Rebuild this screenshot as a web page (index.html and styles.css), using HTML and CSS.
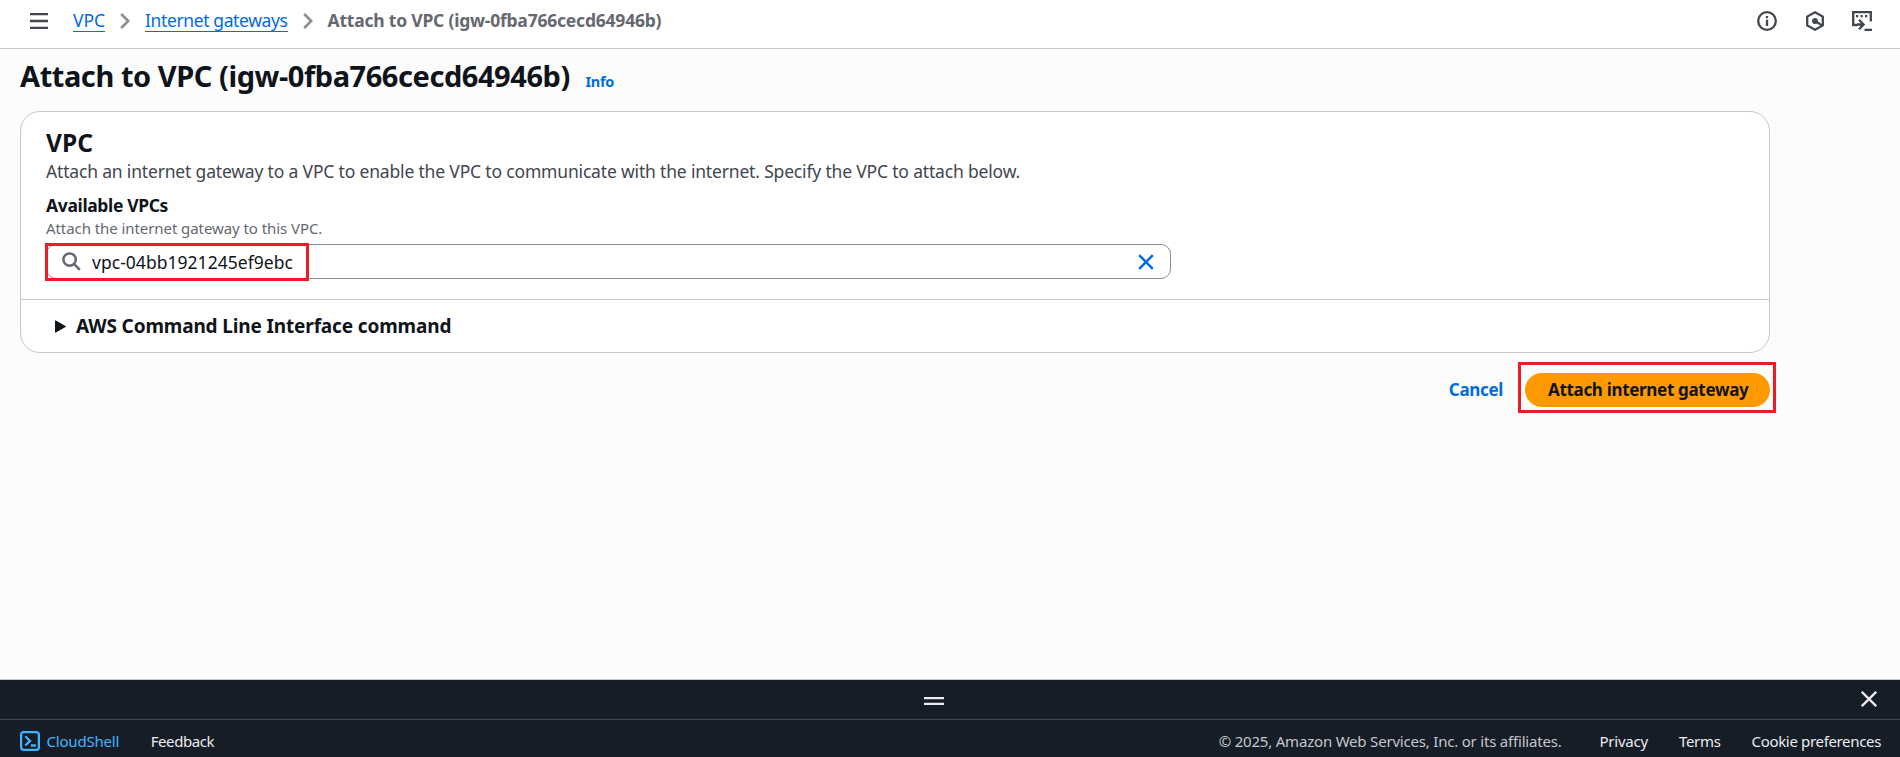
FILE: index.html
```html
<!DOCTYPE html>
<html lang="en">
<head>
<meta charset="utf-8">
<title>Attach to VPC</title>
<link rel="stylesheet" href="styles.css">
</head>
<body>
<header class="topbar">
  <svg class="menu" width="18" height="16" viewBox="0 0 18 16"><path d="M0 1.1h18M0 8h18M0 14.9h18"/></svg>
  <nav class="crumbs">
    <a class="crumb c1">VPC</a>
    <svg class="chev" width="10" height="16" viewBox="0 0 10 16"><path d="M1.2 1l7 7-7 7"/></svg>
    <a class="crumb c2">Internet gateways</a>
    <svg class="chev" width="10" height="16" viewBox="0 0 10 16"><path d="M1.2 1l7 7-7 7"/></svg>
    <span class="current">Attach to VPC (igw-0fba766cecd64946b)</span>
  </nav>
  <div class="tools">
    <svg width="20" height="20" viewBox="0 0 20 20"><circle cx="10" cy="10" r="8.8"/><path d="M10 8.7V15M10 5v2.2"/></svg>
    <svg width="20" height="20" viewBox="0 0 20 20"><path d="M10 1.3l7.8 4.3v8.8L10 18.7l-7.8-4.3V5.6z"/><circle cx="10" cy="10" r="2.9" class="solid"/><path d="M10 10l7 4.4"/></svg>
    <svg width="20" height="20" viewBox="0 0 20 20"><path d="M5.5 14H1.2V1.2h17.6V10.5M12.5 18.8H20M5 13.5h6M7 8.8l4.6 4.7L7 18.2"/><path d="M4 5.2h2.2M8.5 5.2h2.2M13 5.2h2.2"/></svg>
  </div>
</header>
<main class="content">
  <div class="heading"><h1>Attach to VPC (igw-0fba766cecd64946b)</h1><a class="info">Info</a></div>
  <section class="card">
    <div class="card-main">
      <h2>VPC</h2>
      <p class="desc">Attach an internet gateway to a VPC to enable the VPC to communicate with the internet. Specify the VPC to attach below.</p>
      <div class="label">Available VPCs</div>
      <div class="hint">Attach the internet gateway to this VPC.</div>
      <div class="field">
        <svg width="19" height="19" viewBox="0 0 19 19"><circle cx="7.6" cy="7.6" r="6.2"/><path d="M12.2 12.2l5.6 5.6"/></svg>
        <div class="value">vpc-04bb1921245ef9ebc</div>
        <svg class="clear" width="16" height="16" viewBox="0 0 16 16"><path d="M1.2 1.2l13.6 13.6M14.8 1.2L1.2 14.8"/></svg>
        <div class="mark mark-field"></div>
      </div>
    </div>
    <div class="cli">
      <svg width="11" height="13" viewBox="0 0 11 13"><path d="M.5.8v11.4L10.5 6.5z"/></svg>
      <h3>AWS Command Line Interface command</h3>
    </div>
  </section>
  <div class="actions">
    <a class="cancel">Cancel</a>
    <div class="primary">Attach internet gateway<div class="mark mark-button"></div></div>
  </div>
</main>
<footer class="footer">
  <div class="shell-bar">
    <svg class="grip" width="20" height="8" viewBox="0 0 20 8"><path d="M0 1.2h20M0 6.9h20"/></svg>
    <svg class="close" width="16" height="16" viewBox="0 0 16 16"><path d="M.8.8l14.4 14.4M15.2.8L.8 15.2"/></svg>
  </div>
  <div class="links">
    <svg class="cs" width="20" height="20" viewBox="0 0 20 20"><rect x="1.1" y="1.1" width="17.8" height="17.8" rx="2.6"/><path d="M5.3 5.3l4.7 4.6-4.7 4.6M10.8 14.5h5"/></svg>
    <span class="shell">CloudShell</span>
    <span class="feedback">Feedback</span>
    <span class="copy">© 2025, Amazon Web Services, Inc. or its affiliates.</span>
    <span class="privacy">Privacy</span>
    <span class="terms">Terms</span>
    <span class="cookie">Cookie preferences</span>
  </div>
</footer>
</body>
</html>
```
FILE: styles.css
```css
* { box-sizing: border-box; }
body { margin: 0; width: 1900px; height: 757px; overflow: hidden; display: flex; flex-direction: column; background: #fcfcfd; color: #0f141a; font: 17.5px/22px "Noto Sans", "Open Sans", sans-serif; white-space: nowrap; }
svg { display: block; flex: none; fill: none; stroke: currentColor; stroke-width: 2.3; }
h1, h2, h3, p { margin: 0; }
a { color: #006ce0; }
.topbar { height: 49px; display: flex; align-items: flex-start; background: #fff; border-bottom: 1px solid #c6c6cd; padding: 9px 28px 0 30px; }
.menu { margin-top: 4px; color: #424650; }
.crumbs { display: flex; align-items: flex-start; margin-left: 25px; }
.crumb { height: 23px; border-bottom: 1px solid #006ce0; }
.c1 { width: 32px; }
.c2 { width: 142.5px; letter-spacing: -.38px; }
.chev { margin: 4px 15px; color: #8c8c94; stroke-width: 2.6; }
.current { font-weight: 700; color: #656871; letter-spacing: -.21px; }
.tools { display: flex; gap: 27.5px; margin-left: auto; color: #424650; margin-top: 2px; }
.solid { fill: currentColor; stroke: none; }
.content { flex: 1; padding: 8px 130px 0 20px; }
.heading { display: flex; align-items: baseline; gap: 15.5px; height: 54px; }
h1 { font-size: 29px; line-height: 37px; width: 550px; letter-spacing: -.44px; }
.info { font-size: 14.5px; font-weight: 700; letter-spacing: -.3px; }
.card { height: 242px; border: 1px solid #c6c6cd; border-radius: 20px; background: #fff; }
.card-main { height: 188px; padding: 16px 25px 0; border-bottom: 1px solid #c6c6cd; }
h2 { font-size: 24.5px; line-height: 30px; margin-bottom: 2px; }
.desc { color: #424650; letter-spacing: -.175px; }
.label { font-weight: 700; margin-top: 12px; letter-spacing: -.36px; }
.hint { font-size: 15px; line-height: 20px; color: #656871; margin-top: 2px; letter-spacing: -.07px; }
.field { position: relative; width: 1125px; height: 35px; margin-top: 6px; border: 1px solid #8c8c94; border-radius: 10px; display: flex; align-items: center; padding: 0 16px 0 15px; }
.field svg { color: #656871; stroke-width: 2.5; }
.value { margin-left: 11px; letter-spacing: .03px; }
.field .clear { color: #006ce0; margin-left: auto; }
.mark { position: absolute; border: 3px solid #ed1c24; }
.mark-field { left: -2px; top: -2px; width: 264px; height: 38px; }
.cli { display: flex; align-items: center; height: 52px; padding-left: 34px; }
.cli svg { fill: #0f141a; stroke-linejoin: round; stroke-width: 1; }
h3 { font-size: 19px; line-height: 24px; margin-left: 10px; letter-spacing: -.14px; }
.actions { display: flex; justify-content: flex-end; align-items: center; margin-top: 20px; height: 34px; font-size: 17px; font-weight: 700; letter-spacing: -.32px; }
.cancel { margin-right: 22px; }
.primary { position: relative; width: 245px; height: 34px; border-radius: 17px; background: #ff9900; padding: 6px 0 0 23px; }
.mark-button { left: -7px; top: -11px; width: 258px; height: 51px; }
.footer { height: 78px; background: #161d26; color: #ebebf0; border-top: 1px solid #c6c6cd; font-size: 15px; }
.shell-bar { height: 40px; border-bottom: 1px solid #424650; display: flex; padding: 10px 23px 0 924px; }
.grip { margin-top: 7px; }
.close { margin: 1px 0 0 auto; }
.links { display: flex; align-items: center; height: 42px; padding: 0 19px 0 20px; letter-spacing: -.3px; }
.cs, .shell { color: #42b4ff; }
.shell { margin-left: 6.5px; letter-spacing: -.2px; }
.feedback { margin-left: 31.5px; letter-spacing: -.4px; }
.copy { margin-left: auto; color: #c6c6cd; letter-spacing: -.2px; }
.privacy { margin-left: 38px; letter-spacing: -.23px; }
.terms { margin-left: 31px; }
.cookie { margin-left: 31px; letter-spacing: -.34px; }
```
